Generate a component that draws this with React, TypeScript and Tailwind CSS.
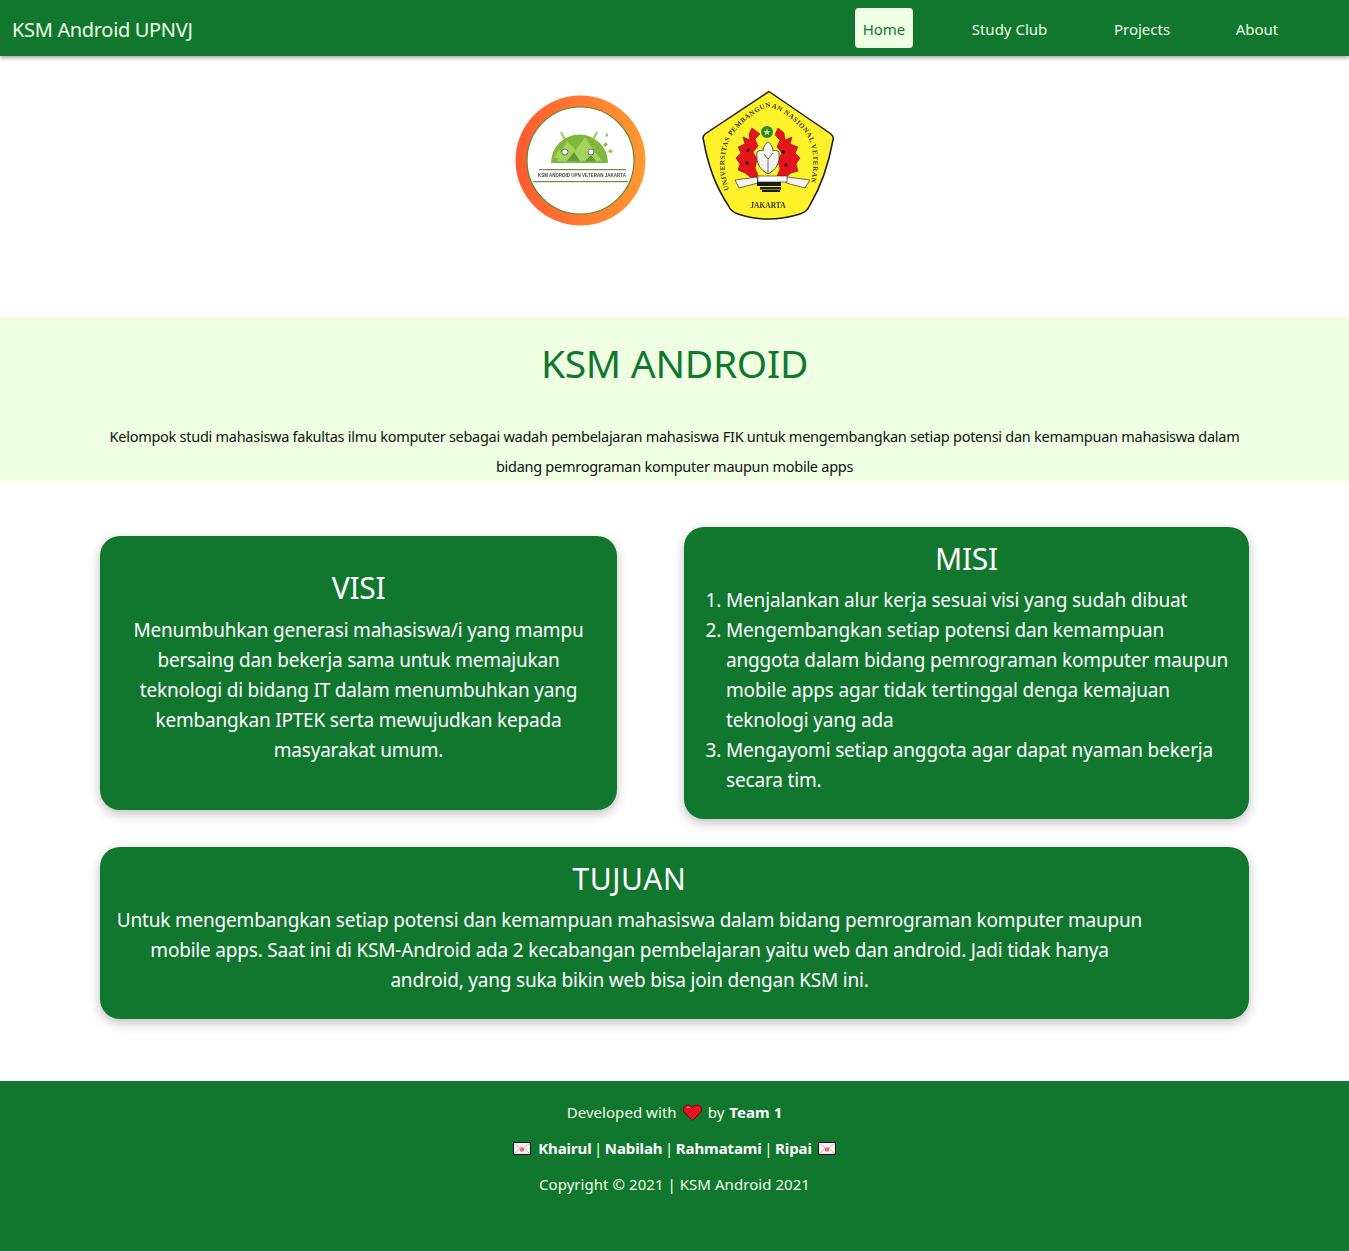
import React from 'react';

const font = { fontFamily: '"Noto Sans", sans-serif' };

function Heart({ className }: { className?: string }) {
  return (
    <svg viewBox="0 0 18 16" className={className}>
      <path d="M9 15.500 1.600 8.400C-.6 6 .5 1.600 4 1c2.200-.4 4 .6 5 2.300C10 1.600 11.800.6 14 1c3.500.6 4.600 5 2.400 7.400Z" fill="#e8101f" stroke="#5a0a10" strokeWidth="0.800" />
      <path d="M3.500 3.500c1-.8 2.200-.7 3 0" stroke="#ff8a90" strokeWidth="1.200" fill="none" />
    </svg>
  );
}

function Envelope({ className }: { className?: string }) {
  return (
    <svg viewBox="0 0 18 13" className={className}>
      <rect x="0.500" y="0.500" width="17" height="12" fill="#f3f0f2" stroke="#1a1020" />
      <path d="M1 1.200 9 7.500l8-6.300M1 12l6-6M17 12l-6-6" fill="none" stroke="#c9bcc4" strokeWidth="0.800" />
      <circle cx="9" cy="7.500" r="2.200" fill="#ec6a70" />
    </svg>
  );
}

function KsmLogo() {
  return (
    <svg viewBox="0 0 132 132" className="w-[132px] h-[132px] blur-[0.4px]">
      <defs>
        <linearGradient id="ring" x1="0" y1="0" x2="1" y2="0">
          <stop offset="0" stopColor="#ff5a30" />
          <stop offset="1" stopColor="#ff9a30" />
        </linearGradient>
      </defs>
      <circle cx="65.500" cy="65.500" r="65" fill="url(#ring)" />
      <circle cx="65.500" cy="65.500" r="53.500" fill="#fff" stroke="#5d8a3a" strokeWidth="1.200" />
      <path d="M50 45l-4-8M78 45l4-8" stroke="#9ccb4a" strokeWidth="2" />
      <path d="M36 68a28.500 28.500 0 0 1 57 0Z" fill="#7fb73c" />
      <path d="M42 66l10-20 9 9 9-13 9 14 8 10Zm-3-3 5-9 4 9Z" fill="#a6d35c" />
      <path d="M52 66l7-9 6 9Zm18 0 6-6 5 6Z" fill="#5f9a34" />
      <circle cx="50" cy="57" r="3" fill="#fff" stroke="#444" strokeWidth="0.700" />
      <circle cx="76" cy="57" r="3" fill="#fff" stroke="#444" strokeWidth="0.700" />
      <path d="m90 42 2-5 1 4Zm-2 8 3-3 2 3-3 2Zm5 6 3-2 2 3-3 1Z" fill="#8cc04a" />
      <rect x="24" y="74" width="87" height="1.200" fill="#6b8e3a" />
      <text x="67" y="82" textAnchor="middle" fontSize="4.500" fontWeight="700" fill="#444" style={{ fontFamily: '"Liberation Sans", sans-serif' }}>KSM ANDROID UPN VETERAN JAKARTA</text>
      <rect x="18" y="86" width="95" height="1.200" fill="#6b8e3a" />
    </svg>
  );
}

function UpnLogo() {
  return (
    <svg viewBox="0 0 132 132" className="w-[132px] h-[132px] blur-[0.3px]">
      <path d="M67 1.500 129 44Q132 47 131 50Q124 88 108 115Q105 122 98 124Q66 134 36 124Q29 122 26 115Q8 88 1.500 50Q0 47 3 44Z" fill="#fff22a" stroke="#1d1d10" strokeWidth="1.500" />
      <path id="arc" d="M27 100C19 75 23 55 31 44C39 33 55 20 67 17C80 20 96 33 104 44C112 55 114 75 107 100" fill="none" />
      <text fontSize="7" fontWeight="700" fill="#3a3410" style={{ fontFamily: '"Liberation Serif", serif' }}>
        <textPath href="#arc" textLength="200" lengthAdjust="spacing">UNIVERSITAS PEMBANGUNAN NASIONAL VETERAN</textPath>
      </text>
      <circle cx="65" cy="42" r="6" fill="#1f8a3a" />
      <path d="m65 38.500 1 2.500 2.500.2-2 1.600.8 2.500-2.300-1.500-2.300 1.500.8-2.500-2-1.600 2.500-.2Z" fill="#f3e84a" />
      <path d="M50 38l-3 6 1 6-7-3 2 7-7 3 3 6-5 5 4 6-2 6 7 3 4 3 6 4 3-5-3-7 2-9-4-7 5-6-3-7 5-5Z" fill="#e8141c" stroke="#5a1010" strokeWidth="0.600" />
      <path d="M76 38l6 5 1 7 7-3-2 7 8 3-3 6 5 5-4 6 2 7-7 2-5 4-6 4-3-5 3-7-2-9 4-7-5-6 3-7-5-5Z" fill="#e8141c" stroke="#5a1010" strokeWidth="0.600" />
      <path d="m44 60 3-2 1 3-3 1Zm-1 12 3-1 1 3-3 1Zm37-12 3 1-1 3-3-1Zm3 13 3 1-1 3-3-1Z" fill="#3a1010" />
      <path d="M55 62c3-2 5-2 6-1 0-5 4-9 5-9s5 4 5 9c1-1 3-1 6 1 1 11-2 17-11 22-9-5-12-11-11-22Z" fill="#f4f4ee" stroke="#333" strokeWidth="0.800" />
      <path d="M66 83V69m0 0 5-6M66 69l-4-5" stroke="#333" strokeWidth="0.700" fill="none" />
      <path d="M33 90 55 87l1 6-19 5Zm75 0-23-3-1 6 19 5Z" fill="#f4f4ee" stroke="#333" strokeWidth="0.700" />
      <rect x="56" y="86" width="29" height="6" fill="#fff" stroke="#222" strokeWidth="0.600" />
      <rect x="55" y="92" width="24" height="4" fill="#1a1a10" />
      <rect x="58" y="97" width="21" height="2.500" fill="#1a1a10" />
      <rect x="60" y="100" width="18" height="2" fill="#1a1a10" />
      <text x="66" y="118" textAnchor="middle" fontSize="7.500" fontWeight="700" fill="#3a3410" style={{ fontFamily: '"Liberation Serif", serif' }}>JAKARTA</text>
    </svg>
  );
}

export default function App() {
  return (
    <div className="min-h-[1251px] bg-white text-[#111]" style={font}>
      {/* Navbar */}
      <nav className="relative z-10 h-14 bg-[#11772f] flex items-center pl-3 pr-[62px] shadow-[0_2px_4px_rgba(0,0,0,0.35)]">
        <span className="pt-[3px] text-[20px] tracking-[-0.33px] text-[#eeffe2]">KSM Android UPNVJ</span>
        <div className="ml-auto flex items-center text-[15px] text-[#eeffe2]">
          <a className="w-[58px] h-10 pt-[3px] flex items-center justify-center rounded bg-[#eeffe2] text-[#11772f]">Home</a>
          <a className="w-[93px] ml-[50px] h-10 pt-[3px] flex items-center justify-center">Study Club</a>
          <a className="w-[72px] ml-[50px] h-10 pt-[3px] flex items-center justify-center">Projects</a>
          <a className="w-[60px] ml-[49px] h-10 pt-[3px] flex items-center justify-center">About</a>
        </div>
      </nav>

      {/* Logos */}
      <div className="h-[261px] flex justify-center items-start pt-[34px] gap-[55px]">
        <div className="mt-[5px]"><KsmLogo /></div>
        <UpnLogo />
      </div>

      {/* Intro */}
      <section className="h-[164px] bg-[#eeffe2] text-center flex flex-col items-center">
        <h1 className="mt-[20px] text-[39px] leading-[52px] tracking-[-0.3px] text-[#11772f]">KSM ANDROID</h1>
        <p className="mt-[32px] w-[1149px] text-[14.5px] leading-[30px] tracking-[-0.27px] text-[#111]">
          Kelompok studi mahasiswa fakultas ilmu komputer sebagai wadah pembelajaran mahasiswa FIK untuk mengembangkan setiap potensi dan kemampuan mahasiswa dalam bidang pemrograman komputer maupun mobile apps
        </p>
      </section>

      {/* Visi misi */}
      <div className="px-[100px] pt-[46px] text-white">
        <div className="flex items-center justify-between">
          <div className="w-[517px] h-[274px] rounded-[20px] bg-[#11772f] shadow-[0_4px_12px_rgba(0,0,0,0.25)] px-[16px] pt-[30px] text-center">
            <h2 className="text-[30px] leading-[44px] tracking-[-0.3px]">VISI</h2>
            <p className="mt-[5px] text-[19px] leading-[30px] tracking-[-0.2px]">
              Menumbuhkan generasi mahasiswa/i yang mampu bersaing dan bekerja sama untuk memajukan teknologi di bidang IT dalam menumbuhkan yang kembangkan IPTEK serta mewujudkan kepada masyarakat umum.
            </p>
          </div>
          <div className="w-[565px] h-[292px] rounded-[20px] bg-[#11772f] shadow-[0_4px_12px_rgba(0,0,0,0.25)] pl-[20px] pr-[16px] pt-[10px]">
            <h2 className="text-[30px] leading-[44px] tracking-[-0.3px] text-center pr-[4px]">MISI</h2>
            <ol className="mt-[4px] list-decimal pl-[22px] text-[19px] leading-[30px] tracking-[-0.17px]">
              <li>Menjalankan alur kerja sesuai visi yang sudah dibuat</li>
              <li>Mengembangkan setiap potensi dan kemampuan anggota dalam bidang pemrograman komputer maupun mobile apps agar tidak tertinggal denga kemajuan teknologi yang ada</li>
              <li>Mengayomi setiap anggota agar dapat nyaman bekerja secara tim.</li>
            </ol>
          </div>
        </div>

        <div className="mt-[28px] h-[172px] rounded-[20px] bg-[#11772f] shadow-[0_4px_12px_rgba(0,0,0,0.25)] pl-[16px] pr-[106px] pt-[10px] text-center">
          <h2 className="text-[30px] leading-[44px] tracking-[0.6px]">TUJUAN</h2>
          <p className="mt-[4px] text-[19px] leading-[30px] tracking-[-0.2px]">
            Untuk mengembangkan setiap potensi dan kemampuan mahasiswa dalam bidang pemrograman komputer maupun mobile apps. Saat ini di KSM-Android ada 2 kecabangan pembelajaran yaitu web dan android. Jadi tidak hanya android, yang suka bikin web bisa join dengan KSM ini.
          </p>
        </div>
      </div>

      {/* Footer */}
      <footer className="mt-[62px] h-[170px] bg-[#11772f] pt-[13px] text-center text-[15px] leading-[36px] tracking-[0.05px] text-[#eeffe2]">
        <p className="flex items-center justify-center">
          Developed with <Heart className="w-[19px] h-[17px] mx-[6px]" /> by <b className="ml-[5px] text-white">Team 1</b>
        </p>
        <p className="flex items-center justify-center">
          <Envelope className="w-[18px] h-[13px] mr-[7px]" />
          <b className="text-white tracking-[-0.1px]">Khairul</b><span className="mx-[2.5px]">|</span><b className="text-white tracking-[-0.1px]">Nabilah</b><span className="mx-[2.5px]">|</span><b className="text-white tracking-[-0.1px]">Rahmatami</b><span className="mx-[2.5px]">|</span><b className="text-white tracking-[-0.1px]">Ripai</b>
          <Envelope className="w-[18px] h-[13px] ml-[6px]" />
        </p>
        <p>Copyright © 2021 | KSM Android 2021</p>
      </footer>
    </div>
  );
}
